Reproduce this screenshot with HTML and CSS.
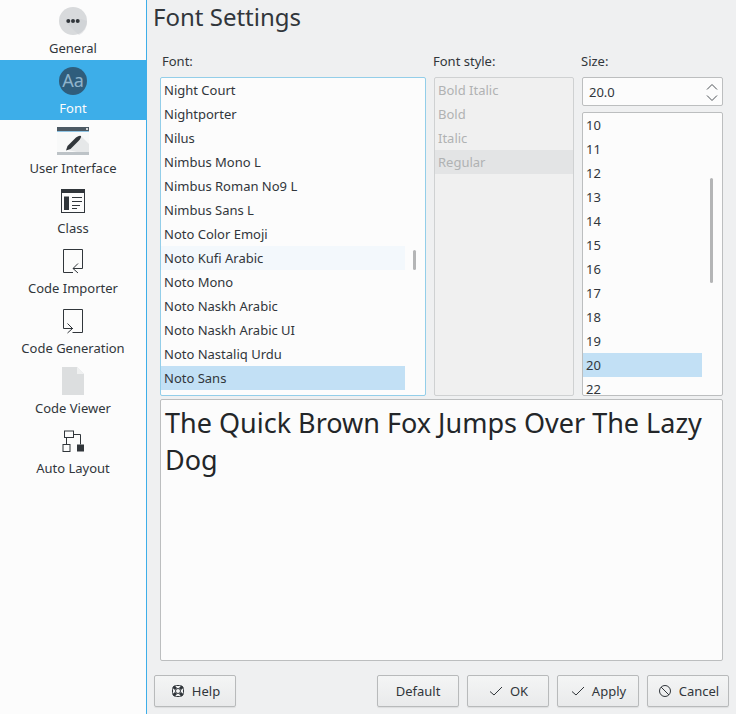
FILE: index.html
```html
<!DOCTYPE html>
<html lang="en">
<head>
<meta charset="utf-8">
<title>Font Settings</title>
<link rel="stylesheet" href="styles.css">
</head>
<body>
<div class="app">
  <nav class="sidebar">
    <div class="nav-item">
      <svg class="nav-icon" viewBox="0 0 32 32"><circle cx="16" cy="16" r="14" fill="#d8dadc"/><path d="M9.500 18 L22 30 A14 14 0 0 0 30 16 L24 14Z" fill="#c9ccd0" opacity=".45"/><circle cx="11.300" cy="16" r="2" fill="#31363b"/><circle cx="16" cy="16" r="2" fill="#31363b"/><circle cx="20.700" cy="16" r="2" fill="#31363b"/></svg>
      <span>General</span>
    </div>
    <div class="nav-item active">
      <svg class="nav-icon" viewBox="0 0 32 32"><circle cx="16" cy="16" r="14" fill="#2f5d7c"/><text x="16" y="22" text-anchor="middle" class="aa">Aa</text></svg>
      <span>Font</span>
    </div>
    <div class="nav-item">
      <svg class="nav-icon" viewBox="0 0 32 32"><rect x="0" y="2" width="32" height="28" fill="#f8f9f9"/><path d="M24 11L32 19V27H20L11 25Z" fill="#e6e8e9"/><rect x="0" y="2" width="32" height="4" fill="#4d5a64"/><rect x="0" y="6" width="32" height="1" fill="#8fc4e4"/><rect x="0" y="27" width="32" height="3" fill="#bdc3c7"/><rect x="29" y="3" width="2" height="2" fill="#d5d8db"/><path d="M9 25.500L10.500 21L12 19.500L19 12.500Q22.500 9.800 24 11Q24.500 12.500 21.500 16L15 22.500L13.500 24Z" fill="#31363b"/></svg>
      <span>User Interface</span>
    </div>
    <div class="nav-item">
      <svg class="nav-icon" viewBox="0 0 32 32"><rect x="4.500" y="4.500" width="23" height="23" fill="#fcfcfc" stroke="#31363b"/><rect x="4" y="4" width="24" height="4" fill="#31363b"/><rect x="7" y="11.500" width="5" height="13.500" fill="#31363b"/><path d="M15 12.500H25M15 16.500H25M15 20.500H23M15 23.500H20" stroke="#31363b"/></svg>
      <span>Class</span>
    </div>
    <div class="nav-item">
      <svg class="nav-icon" viewBox="0 0 32 32"><path d="M16 27.500H6.500V4.500H25.500V23.500H16M21 18.500L16 23.500L21 28" fill="none" stroke="#31363b"/></svg>
      <span>Code Importer</span>
    </div>
    <div class="nav-item">
      <svg class="nav-icon" viewBox="0 0 32 32"><path d="M15.500 27.500H25.500V4.500H6.500V23.500H16M10.500 18.500L15.500 23.500L10.500 28" fill="none" stroke="#31363b"/></svg>
      <span>Code Generation</span>
    </div>
    <div class="nav-item">
      <svg class="nav-icon" viewBox="0 0 32 32"><path d="M5 2H20L27 9V30H5Z" fill="#dcdedf"/><path d="M20 2L27 9H20Z" fill="#f0f1f1"/></svg>
      <span>Code Viewer</span>
    </div>
    <div class="nav-item">
      <svg class="nav-icon" viewBox="0 0 32 32"><rect x="7.500" y="6" width="9" height="6.500" fill="none" stroke="#31363b"/><rect x="6" y="19.500" width="7" height="7" fill="none" stroke="#31363b"/><rect x="20" y="19.500" width="7" height="7" fill="#31363b"/><path d="M9.500 12.500V19.500M16.500 9.500H23.500V19.500" fill="none" stroke="#31363b"/></svg>
      <span>Auto Layout</span>
    </div>
  </nav>

  <main class="content">
    <h1 class="title">Font Settings</h1>
    <div class="chooser">
      <section class="col">
        <label class="col-label col-label-font">Font:</label>
        <div class="list list-focus">
          <div class="row">Night Court</div>
          <div class="row">Nightporter</div>
          <div class="row">Nilus</div>
          <div class="row">Nimbus Mono L</div>
          <div class="row">Nimbus Roman No9 L</div>
          <div class="row">Nimbus Sans L</div>
          <div class="row">Noto Color Emoji</div>
          <div class="row row-hover">Noto Kufi Arabic</div>
          <div class="row">Noto Mono</div>
          <div class="row">Noto Naskh Arabic</div>
          <div class="row">Noto Naskh Arabic UI</div>
          <div class="row">Noto Nastaliq Urdu</div>
          <div class="row row-selected">Noto Sans</div>
          <span class="thumb thumb-font"></span>
        </div>
      </section>
      <section class="col">
        <label class="col-label">Font style:</label>
        <div class="list list-disabled">
          <div class="row-wide">Bold Italic</div>
          <div class="row-wide">Bold</div>
          <div class="row-wide">Italic</div>
          <div class="row-wide row-current">Regular</div>
        </div>
      </section>
      <section class="col">
        <label class="col-label">Size:</label>
        <div class="spin">
          <span>20.0</span>
          <svg class="spin-arrows" viewBox="0 0 12 24"><path d="M1 9.500L6 4.500L11 9.500M1 15.500L6 20.500L11 15.500" fill="none" stroke="#4d5257"/></svg>
        </div>
        <div class="list list-size">
          <div class="row">10</div>
          <div class="row">11</div>
          <div class="row">12</div>
          <div class="row">13</div>
          <div class="row">14</div>
          <div class="row">15</div>
          <div class="row">16</div>
          <div class="row">17</div>
          <div class="row">18</div>
          <div class="row">19</div>
          <div class="row row-selected">20</div>
          <div class="row">22</div>
          <span class="thumb thumb-size"></span>
        </div>
      </section>
    </div>
    <div class="preview">The Quick Brown Fox Jumps Over The Lazy Dog</div>
    <footer class="buttons">
      <button class="btn">
        <svg class="btn-icon" viewBox="0 0 16 16"><rect x="2.500" y="2.500" width="11" height="11" rx="4" fill="none" stroke="#31363b"/><circle cx="8" cy="8" r="2.500" fill="#f4f5f5" stroke="#31363b"/><path d="M3.500 3.500L6 6M12.500 3.500L10 6M3.500 12.500L6 10M12.500 12.500L10 10" stroke="#31363b" stroke-width="3"/></svg>
        Help
      </button>
      <span class="spacer"></span>
      <button class="btn">Default</button>
      <button class="btn">
        <svg class="btn-icon" viewBox="0 0 16 16"><path d="M2 8.500L6 12L14 4" fill="none" stroke="#31363b"/></svg>
        OK
      </button>
      <button class="btn">
        <svg class="btn-icon" viewBox="0 0 16 16"><path d="M2 8.500L6 12L14 4" fill="none" stroke="#31363b"/></svg>
        Apply
      </button>
      <button class="btn">
        <svg class="btn-icon" viewBox="0 0 16 16"><circle cx="8" cy="8" r="5.500" fill="none" stroke="#31363b"/><path d="M4 4L12 12" stroke="#31363b"/></svg>
        Cancel
      </button>
    </footer>
  </main>
</div>
</body>
</html>
```
FILE: styles.css
```css
* { box-sizing: border-box; }
html, body { margin: 0; height: 100%; }
body {
  font-family: "Noto Sans", sans-serif;
  font-size: 13px;
  color: #31363b;
  background: #eff0f1;
  overflow: hidden;
}
.app { display: flex; width: 736px; height: 714px; }

.sidebar {
  width: 147px;
  flex: none;
  background: #fcfcfc;
  border-right: 1px solid #3daee9;
}
.nav-item {
  height: 60px;
  display: flex;
  flex-direction: column;
  align-items: center;
  padding-top: 5px;
  line-height: 18px;
  gap: 2px;
}
.nav-item.active { background: #3daee9; color: #fcfcfc; }
.nav-icon { width: 32px; height: 32px; display: block; flex: none; }
.aa { font-family: "Noto Sans", sans-serif; font-size: 18px; fill: #8fb4cc; }

.content {
  flex: 1;
  min-width: 0;
  display: flex;
  flex-direction: column;
  padding: 0 7px 7px 6px;
}
.title {
  margin: 0;
  font-size: 24px;
  font-weight: 400;
  line-height: 34px;
  height: 52px;
}
.chooser {
  display: grid;
  grid-template-columns: 266px 140px 141px;
  column-gap: 8px;
  margin-left: 7px;
  margin-right: 6px;
  height: 344px;
}
.col { display: flex; flex-direction: column; min-height: 0; }
.col-label { line-height: 18px; height: 25px; margin-left: -1px; }
.col-label-font { margin-left: 2px; }
.list {
  position: relative;
  flex: 1;
  min-height: 0;
  overflow: hidden;
  background: #fcfcfc;
  border: 1px solid #bcbebf;
  border-radius: 2px;
}
.list-focus { border-color: #93cee9; }
.list-disabled { background: #f0f0f0; border-color: #cfd1d2; color: #b0b2b3; }
.list-size { margin-top: 6px; }
.row { height: 24px; line-height: 24px; padding-left: 3px; margin-right: 20px; white-space: nowrap; }
.row-wide { height: 24px; line-height: 24px; padding-left: 3px; }
.row-current { background: #e3e4e5; }
.row-hover { background: #f3f8fc; }
.row-selected { background: #c2e0f5; }
.thumb { position: absolute; width: 3px; border-radius: 1.500px; background: #b4b5b6; }
.thumb-font { left: 252px; top: 172px; height: 20px; }
.thumb-size { left: 127px; top: 65px; height: 105px; }
.spin {
  height: 29px;
  flex: none;
  display: flex;
  align-items: center;
  justify-content: space-between;
  padding: 0 4px 0 6px;
  background: #fcfcfc;
  border: 1px solid #bcbebf;
  border-radius: 2px;
}
.spin-arrows { width: 12px; height: 24px; }
.preview {
  height: 262px;
  margin: 3px 6px 0 7px;
  padding: 4px 4px 0 4px;
  background: #fcfcfc;
  border: 1px solid #bcbebf;
  border-radius: 2px;
  color: #232629;
  font-size: 27px;
  line-height: 37px;
}
.buttons {
  display: flex;
  gap: 8px;
  margin-top: 14px;
  height: 32px;
  padding-left: 1px;
}
.spacer { flex: 1; }
.btn {
  width: 82px;
  height: 32px;
  display: flex;
  align-items: center;
  justify-content: center;
  gap: 6px;
  padding: 0;
  font: inherit;
  color: inherit;
  background: linear-gradient(#f4f5f5, #e9eaeb);
  border: 1px solid #b8babb;
  border-radius: 2px;
  box-shadow: 0 1px 1px rgba(0,0,0,.08);
}
.btn-icon { width: 16px; height: 16px; flex: none; }
```
